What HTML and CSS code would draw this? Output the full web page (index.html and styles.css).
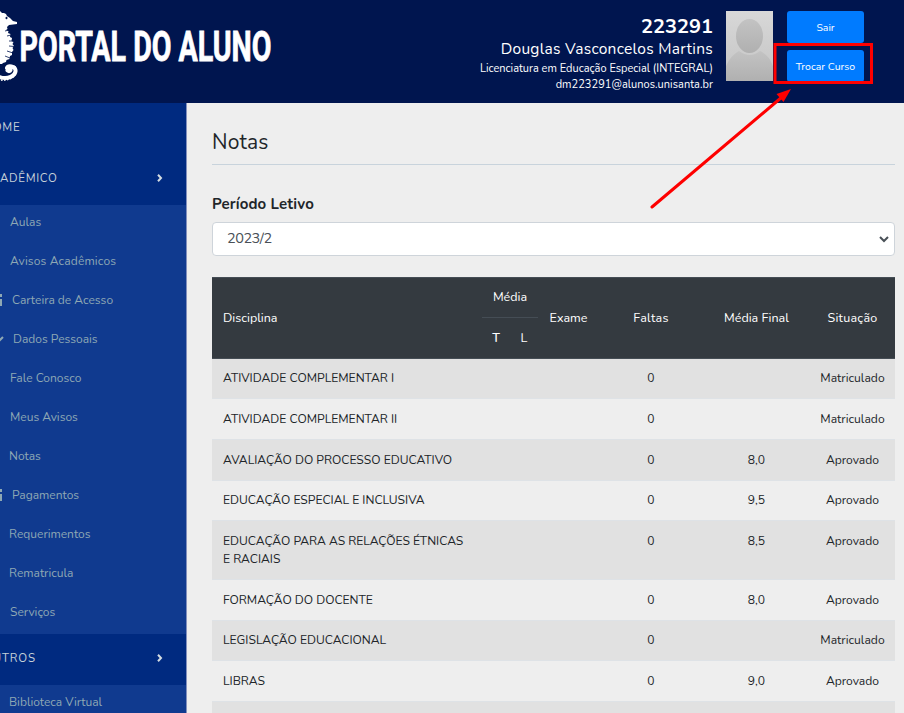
FILE: index.html
```html
<!DOCTYPE html>
<html lang="pt-BR">
<head>
<meta charset="utf-8">
<title>Portal do Aluno</title>
<link rel="stylesheet" href="styles.css">
</head>
<body>
<header class="topbar">
  <svg class="logo" width="280" height="103" viewBox="0 0 280 103" role="img" aria-label="Portal do Aluno">
    <path fill="#fff" d="M0 11l2 2 2 0 2 1 1 2 3 2 3 3 4 1v2l-4 .5-4 .5-2 2 .5 2-1.500 1 2.500 1-.5 2 2.500 1-.5 3 2 1-.5 3 2 1-1 2 1.500 2-1.500 2 1 2-1.500 2 0 3-2 1-.5 3-3 1-.5 2-3 1-1 1H0z"/>
    <path fill="none" stroke="#00154f" stroke-width=".8" d="M5 31l4-1M7 36l4-1M9 41h4M9 46l5 .5M7 51l6 2M5 56l5 2"/>
    <ellipse cx="6.500" cy="18" rx="1" ry="1.300" fill="#00154f"/>
    <path fill="none" stroke="#fff" stroke-width="4" stroke-linecap="round" d="M7.500 70.500q2 1.500 3-.5c.5-3-2-3.500-3-3M7 68c1-3 8-2 8.500 2 .5 6-8 10-16 7"/>
    <path fill="none" stroke="#fff" stroke-width="1.500" stroke-dasharray="1.500 1.500" d="M14 66q5 5 0 10-5 5-14 4"/>
    <text class="logo-text" x="19.500" y="61" textLength="252" lengthAdjust="spacingAndGlyphs">PORTAL DO ALUNO</text>
  </svg>
  <div class="user">
    <div class="user-id"><span>223291</span></div>
    <div class="user-name"><span>Douglas Vasconcelos Martins</span></div>
    <div class="user-course"><span>Licenciatura em Educação Especial (INTEGRAL)</span></div>
    <div class="user-mail"><span>dm223291@alunos.unisanta.br</span></div>
  </div>
  <svg class="photo" width="47" height="70" viewBox="0 0 47 70">
    <defs>
      <linearGradient id="bg" x2="0" y2="1"><stop stop-color="#d8d8d8"/><stop offset="1" stop-color="#c4c4c4"/></linearGradient>
      <linearGradient id="fg" x2="0" y2="1"><stop stop-color="#c3c3c3"/><stop offset="1" stop-color="#b0b0b0"/></linearGradient>
    </defs>
    <path fill="url(#bg)" d="M0 0h47v70H0z"/>
    <path fill="url(#fg)" d="M0 55q5-11 13-15 11 8 21 0 9 4 13 15v15H0z"/>
    <ellipse cx="23.500" cy="25" rx="13.500" ry="17" fill="url(#fg)"/>
  </svg>
  <div class="actions">
    <button class="btn">Sair</button>
    <button class="btn">Trocar Curso</button>
  </div>
</header>
<div class="page">
  <nav class="sidebar">
    <a class="group"><span>HOME</span></a>
    <a class="group acad"><span>ACADÊMICO</span><svg class="chev" width="6" height="8" viewBox="0 0 6 8"><path d="M1 .8L4 4 1 7.200"/></svg></a>
    <div class="sub">
      <a>Aulas</a>
      <a class="avisos">Avisos Acadêmicos</a>
      <a class="with-icon"><svg width="12" height="12" viewBox="0 0 12 12"><path d="M3 1h8v2M8 6h3v5H7"/></svg>Carteira de Acesso</a>
      <a class="with-pen"><svg width="14" height="12" viewBox="0 0 14 12"><path d="M13 4l-4 4-2-2"/></svg>Dados Pessoais</a>
      <a>Fale Conosco</a>
      <a>Meus Avisos</a>
      <a class="near">Notas</a>
      <a class="with-icon"><svg width="12" height="12" viewBox="0 0 12 12"><path d="M3 1h8v2M8 6h3v5H7"/></svg>Pagamentos</a>
      <a class="near">Requerimentos</a>
      <a class="near">Rematricula</a>
      <a>Serviços</a>
    </div>
    <a class="group"><span>OUTROS</span><svg class="chev" width="6" height="8" viewBox="0 0 6 8"><path d="M1 .8L4 4 1 7.200"/></svg></a>
    <div class="sub"><a class="near">Biblioteca Virtual</a></div>
  </nav>
  <main class="content">
    <h1>Notas</h1>
    <label class="label">Período Letivo</label>
    <div class="select"><span>2023/2</span><svg width="10" height="7" viewBox="0 0 10 7"><path d="M1 1l4 4 4-4"/></svg></div>
    <div class="table">
      <div class="thead">
        <div class="left">Disciplina</div>
        <div class="media"><div class="media-top">Média</div><div class="media-sub"><b>T</b><span>L</span></div></div>
        <div>Exame</div><div class="faltas">Faltas</div><div>Média Final</div><div class="faltas">Situação</div>
      </div>
      <div class="row"><div class="left">ATIVIDADE COMPLEMENTAR I</div><div></div><div></div><div>0</div><div></div><div>Matriculado</div></div>
      <div class="row"><div class="left">ATIVIDADE COMPLEMENTAR II</div><div></div><div></div><div>0</div><div></div><div>Matriculado</div></div>
      <div class="row"><div class="left">AVALIAÇÃO DO PROCESSO EDUCATIVO</div><div></div><div></div><div>0</div><div>8,0</div><div>Aprovado</div></div>
      <div class="row"><div class="left">EDUCAÇÃO ESPECIAL E INCLUSIVA</div><div></div><div></div><div>0</div><div>9,5</div><div>Aprovado</div></div>
      <div class="row"><div class="left">EDUCAÇÃO PARA AS RELAÇÕES ÉTNICAS<br>E RACIAIS</div><div></div><div></div><div>0</div><div>8,5</div><div>Aprovado</div></div>
      <div class="row"><div class="left">FORMAÇÃO DO DOCENTE</div><div></div><div></div><div>0</div><div>8,0</div><div>Aprovado</div></div>
      <div class="row"><div class="left">LEGISLAÇÃO EDUCACIONAL</div><div></div><div></div><div>0</div><div></div><div>Matriculado</div></div>
      <div class="row"><div class="left">LIBRAS</div><div></div><div></div><div>0</div><div>9,0</div><div>Aprovado</div></div>
      <div class="row"></div>
    </div>
  </main>
</div>
<svg class="markup" width="904" height="713" viewBox="0 0 904 713">
  <rect x="775" y="44.500" width="96.500" height="38" fill="none" stroke="#fe0000" stroke-width="3"/>
  <path d="M652 207L782 97" stroke="#fe0000" stroke-width="3" stroke-linecap="round"/>
  <path d="M791 89l-7.500 13-7-8z" fill="#fe0000"/>
</svg>
</body>
</html>
```
FILE: styles.css
```css
* { box-sizing: border-box; }
body {
  margin: 0;
  width: 904px;
  height: 713px;
  overflow: hidden;
  background: #eee;
  color: #212529;
  font-family: Nunito, Lato, sans-serif;
  font-size: 12.1px;
}
.topbar {
  display: flex;
  height: 103px;
  background: #00154f;
  color: #fff;
}
.logo { flex: none; }
.logo-text {
  font: 700 42.500px Roboto, sans-serif;
  fill: #fff;
  stroke: #fff;
  stroke-width: .8px;
}
.user {
  display: flex;
  flex-direction: column;
  width: 433px;
  padding-top: 14px;
  text-align: right;
  white-space: nowrap;
}
.user-id { font-size: 20px; font-weight: 700; line-height: 25px; }
.user-name { font-size: 15.5px; line-height: 20px; letter-spacing: .28px; }
.user-course { font-size: 11px; line-height: 19px; }
.user-mail { font-size: 11px; line-height: 14px; letter-spacing: .05px; }
.photo { margin: 11px 14px 0 13px; flex: none; }
.actions { display: flex; flex-direction: column; gap: 7px; padding-top: 11px; }
.btn {
  width: 77px;
  height: 32px;
  padding: 1px 0 0;
  border: 0;
  border-radius: 3px;
  background: #007bff;
  color: #fff;
  font: 10.500px Nunito, Lato, sans-serif;
}
.page { display: flex; height: 610px; }
.sidebar {
  width: 187px;
  flex: none;
  overflow: hidden;
  border-right: 1px solid #8290bd;
  background: #103a8f;
}
.group {
  display: flex;
  align-items: center;
  justify-content: space-between;
  height: 51px;
  padding: 0 23px 3px 0;
  background: #002a80;
  color: #c5d0d8;
  font-size: 11.5px;
  letter-spacing: .9px;
}
.group span { margin-left: -17px; }
.acad span { letter-spacing: .65px; }
.chev path { fill: none; stroke: #d3dbe0; stroke-width: 2; }
.sub a {
  display: flex;
  align-items: center;
  height: 39px;
  padding: 0 0 5px 10px;
  color: #8ea8b4;
  font-size: 12px;
}
.sub .avisos { letter-spacing: .15px; }
.sub .near { padding-left: 9px; }
.sub svg { margin-left: -20px; fill: none; stroke: #8ea8b4; stroke-width: 2; }
.sub .with-icon svg { margin-right: 10px; }
.sub .with-pen svg { margin-right: 9px; }
.content { width: 683px; margin-left: 25px; }
h1 {
  height: 62px;
  margin: 0;
  padding-top: 24px;
  border-bottom: 1px solid #c8d3dc;
  font-size: 21px;
  font-weight: 400;
  line-height: 30px;
  letter-spacing: .15px;
}
.label {
  display: block;
  height: 57px;
  padding-top: 29px;
  font-size: 15px;
  font-weight: 700;
  line-height: 20px;
  letter-spacing: .12px;
}
.select {
  display: flex;
  align-items: center;
  justify-content: space-between;
  height: 34px;
  padding: 0 5px 2px 14px;
  border: 1px solid #ced4da;
  border-radius: 4px;
  background: #fff;
  color: #495057;
  font-size: 14.5px;
}
.select span { letter-spacing: -.5px; }
.select svg { fill: none; stroke: #495057; stroke-width: 2; margin-top: 3px; }
.table { margin-top: 21px; }
.thead, .row {
  display: grid;
  grid-template-columns: 270px 56px 61px 104px 107px 85px;
  text-align: center;
}
.left { padding-left: 11px; text-align: left; white-space: nowrap; }
.thead {
  height: 82px;
  border-top: 1px solid #454d55;
  border-bottom: 1px solid #454d55;
  background: #343a40;
  color: #fff;
  font-size: 12.5px;
  line-height: 80px;
}
.faltas { letter-spacing: .25px; }
.media { line-height: 39px; }
.media-top { height: 40px; border-bottom: 1px solid #454d55; line-height: 38px; }
.media-sub { display: grid; grid-template-columns: 28px 28px; }
.media-sub b { font-weight: 600; }
.row { height: 41px; padding-top: 10px; border-top: 1px solid #dee2e6; line-height: 18px; }
.row:nth-child(even) { background: #e1e1e1; }
.row:nth-child(2) { height: 39px; padding-top: 10px; border-top: 0; }
.row:nth-child(3) { padding-top: 11px; }
.row:nth-child(4) { padding-top: 11px; }
.row:nth-child(5) { height: 40px; }
.row:nth-child(6) { height: 59px; padding-top: 11px; }
.row:nth-child(7) { padding-top: 11px; }
.row:nth-child(8) { height: 40px; }
.row:nth-child(9) { padding-top: 11px; }
.markup { position: absolute; top: 0; left: 0; pointer-events: none; }
```
